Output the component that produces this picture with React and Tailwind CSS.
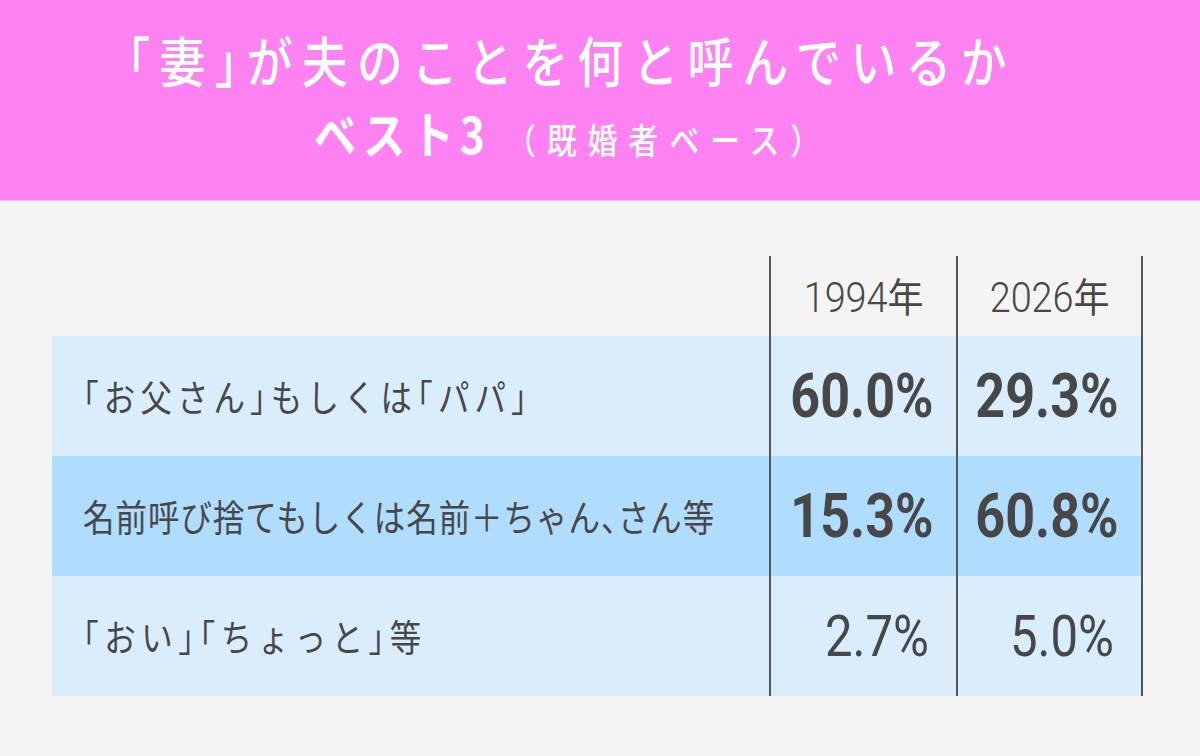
import React from 'react';

const rows = [
  { label: '「お父さん」もしくは「パパ」', a: '60.0%', b: '29.3%', bold: true, bg: 'bg-[#d9edfd]', track: 'tracking-[6px]' },
  { label: '名前呼び捨てもしくは名前＋ちゃん、さん等', a: '15.3%', b: '60.8%', bold: true, bg: 'bg-[#b0dcfe]', track: 'tracking-[1.2px]' },
  { label: '「おい」「ちょっと」等', a: '2.7%', b: '5.0%', bold: false, bg: 'bg-[#d9edfd]', track: 'tracking-[6.5px]' },
];

const jp = "font-['Noto_Sans_CJK_JP','Noto_Sans',sans-serif]";
const num = "font-['Roboto','Noto_Sans_CJK_JP',sans-serif]";

// brackets and commas are set half-width, as in the reference
function Label({ text }) {
  return text.split('').map((ch, i) =>
    '「」、'.includes(ch) ? (
      <span key={i} className="[font-feature-settings:'halt']">
        {ch}
      </span>
    ) : (
      ch
    )
  );
}

function ValueCell({ value, bold, last }) {
  return (
    <div
      className={`flex w-[187px] items-center justify-end border-l-2 border-[#555] ${bold ? 'pr-[22px]' : 'pr-[27px]'} ${last ? 'border-r-2' : ''}`}
    >
      <span
        className={`${num} inline-block origin-right text-[#474747] leading-none ${
          bold ? 'scale-x-[0.84] text-[62px] font-bold' : 'scale-x-[0.86] text-[57px] font-normal'
        }`}
      >
        {value}
      </span>
    </div>
  );
}

export default function App() {
  return (
    <div className="h-[756px] w-[1200px] overflow-hidden bg-[#f4f4f4]">
      <div className="flex h-[201px] flex-col items-center border-b border-[#f6c2f2] bg-[#ff82f3] pt-[24px] pr-[56px] text-white">
        <div className={`${jp} scale-x-[0.85] text-[54px] font-medium leading-[72px] tracking-[10.8px]`}>
          <Label text="「妻」が夫のことを何と呼んでいるか" />
        </div>
        <div className={`${jp} flex scale-x-[0.85] items-baseline leading-[72px]`}>
          <span className="text-[50px] font-bold tracking-[7px]">ベスト3</span>
          <span className="ml-[18px] text-[35px] font-medium tracking-[13px]">（既婚者ベース）</span>
        </div>
      </div>

      <div className="ml-[52px] mt-[55px] flex w-[1091px] flex-col">
        <div className="flex h-[80px]">
          <div className="w-[717px]" />
          {['1994', '2026'].map((y, i) => (
            <div
              key={y}
              className={`flex w-[187px] items-center justify-center border-l-2 border-[#555] pt-[2px] ${i === 1 ? 'border-r-2' : ''}`}
            >
              <span className="inline-block scale-x-[0.9] text-[#474747] leading-none">
                <span className={`${num} text-[42px] font-light`}>{y}</span>
                <span className={`${jp} text-[40px] font-normal`}>年</span>
              </span>
            </div>
          ))}
        </div>
        {rows.map((r) => (
          <div key={r.label} className={`flex h-[120px] ${r.bg}`}>
            <div className="flex w-[717px] items-center pl-[31px]">
              <span
                className={`${jp} ${r.track} inline-block origin-left scale-x-[0.85] whitespace-nowrap text-[37px] text-[#474747] leading-none`}
              >
                <Label text={r.label} />
              </span>
            </div>
            <ValueCell value={r.a} bold={r.bold} />
            <ValueCell value={r.b} bold={r.bold} last />
          </div>
        ))}
      </div>
    </div>
  );
}
